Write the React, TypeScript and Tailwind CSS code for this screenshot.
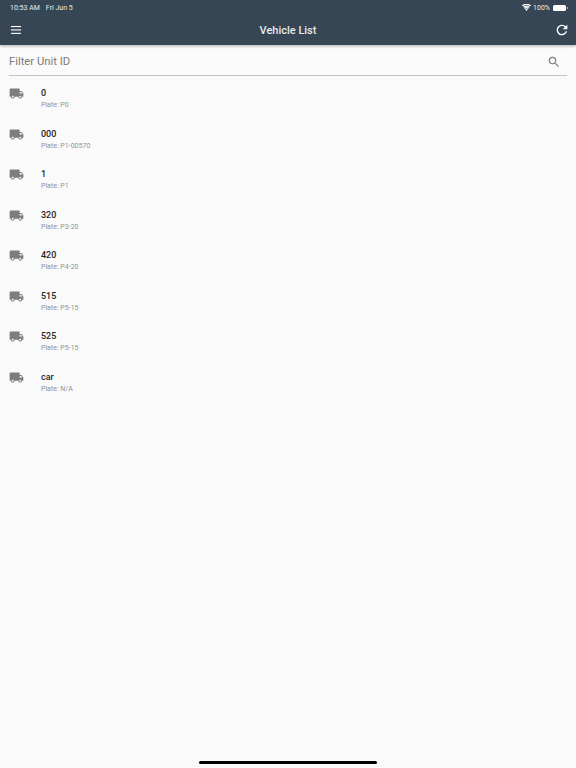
import React from 'react'

const vehicles = [
  { id: '0', plate: 'P0' },
  { id: '000', plate: 'P1-00570' },
  { id: '1', plate: 'P1' },
  { id: '320', plate: 'P3-20' },
  { id: '420', plate: 'P4-20' },
  { id: '515', plate: 'P5-15' },
  { id: '525', plate: 'P5-15' },
  { id: 'car', plate: 'N/A' },
]

const TruckIcon = () => (
  <svg width="15" height="15" viewBox="0 0 24 24" fill="#7d7d7d">
    <path d="M20 8h-3V4H3c-1.1 0-2 .9-2 2v11h2c0 1.66 1.34 3 3 3s3-1.34 3-3h6c0 1.66 1.34 3 3 3s3-1.34 3-3h2v-5l-3-4zM6 18.5c-.83 0-1.5-.67-1.5-1.5s.67-1.5 1.5-1.5 1.5.67 1.5 1.5-.67 1.5-1.5 1.5zm13.5-9l1.96 2.5H17V9.5h2.5zm-1.5 9c-.83 0-1.5-.67-1.5-1.5s.67-1.5 1.5-1.5 1.5.67 1.5 1.5-.67 1.5-1.5 1.5z" />
  </svg>
)

export default function App() {
  return (
    <div className="w-[576px] h-[768px] overflow-hidden flex flex-col bg-[#fafafa] font-['Roboto',sans-serif]">
      <header className="h-[45px] shrink-0 bg-[#364655] text-white shadow-[0_1px_3px_rgba(0,0,0,0.3)] relative">
        <div className="h-[14px] pt-[1px] pl-[10px] pr-[9px] flex items-center justify-between text-[7px] leading-[12px] text-white/90">
          <div className="flex gap-[6px]">
            <span>10:53 AM</span>
            <span>Fri Jun 5</span>
          </div>
          <div className="flex items-center gap-[2px]">
            <svg width="9" height="7" viewBox="0 0 24 18" fill="white">
              <path d="M12 18l3.5-4.4a5.6 5.6 0 0 0-7 0L12 18zM5.9 10.4l2 2.4a6.6 6.6 0 0 1 8.2 0l2-2.4a9.8 9.8 0 0 0-12.2 0zM3.3 7.2l2 2.4a10.8 10.8 0 0 1 13.4 0l2-2.4a14 14 0 0 0-17.4 0zM0 3.2l2.1 2.6a15 15 0 0 1 19.8 0L24 3.2a18.4 18.4 0 0 0-24 0z" />
            </svg>
            <span>100%</span>
            <div className="ml-[1px] w-[13px] h-[6px] rounded-[1.5px] bg-white" />
            <div className="w-[1px] h-[2px] bg-white/60 -ml-[1px] mr-[-1px]" />
          </div>
        </div>
        <div className="h-[31px] pl-[11px] pr-[6px] flex items-center justify-between">
          <svg width="10" height="8" viewBox="0 0 10 8" fill="white">
            <rect y="0" width="10" height="1.1" />
            <rect y="3.4" width="10" height="1.1" />
            <rect y="6.8" width="10" height="1.1" />
          </svg>
          <span className="text-[11px] font-medium text-[#e8ebed] ml-[1px] mt-[3px]">Vehicle List</span>
          <svg width="16" height="16" viewBox="0 0 24 24" fill="white">
            <path d="M17.65 6.35A7.95 7.95 0 0 0 12 4C7.58 4 4 7.58 4 12s3.58 8 8 8c3.73 0 6.84-2.55 7.73-6h-2.08A5.99 5.99 0 0 1 12 18c-3.31 0-6-2.69-6-6s2.69-6 6-6c1.66 0 3.14.69 4.22 1.78L13 11h7V4l-2.35 2.35z" />
          </svg>
        </div>
      </header>

      <div className="mx-[9px] h-[31px] shrink-0 pt-[3px] border-b border-[#c4c4c4] flex items-center justify-between pr-[6px]">
        <span className="mt-[1px] text-[11.25px] text-[#7a7a7a]">Filter Unit ID</span>
        <svg width="14" height="14" viewBox="0 0 24 24" fill="#808080">
          <path d="M15.5 14h-.79l-.28-.27A6.47 6.47 0 0 0 16 9.5 6.5 6.5 0 1 0 9.5 16c1.61 0 3.09-.59 4.23-1.57l.27.28v.79l5 4.99L20.49 19l-4.99-5zm-6 0C7.01 14 5 11.99 5 9.5S7.01 5 9.5 5 14 7.01 14 9.5 11.99 14 9.5 14z" />
        </svg>
      </div>

      <ul className="pt-[11px] flex flex-col">
        {vehicles.map((v) => (
          <li key={v.id + v.plate} className="h-[40.5px] flex items-start pl-[9px]">
            <div className="w-[32px] -mt-[1px] shrink-0">
              <TruckIcon />
            </div>
            <div>
              <div className="text-[9px] leading-[12px] font-medium text-[#262626]">{v.id}</div>
              <div className="mt-[1px] text-[7px] leading-[11px] text-[#929292]">Plate: {v.plate}</div>
            </div>
          </li>
        ))}
      </ul>

      <div className="mt-auto mb-[4px] mx-auto w-[178px] h-[3px] shrink-0 rounded-full bg-black" />
    </div>
  )
}
